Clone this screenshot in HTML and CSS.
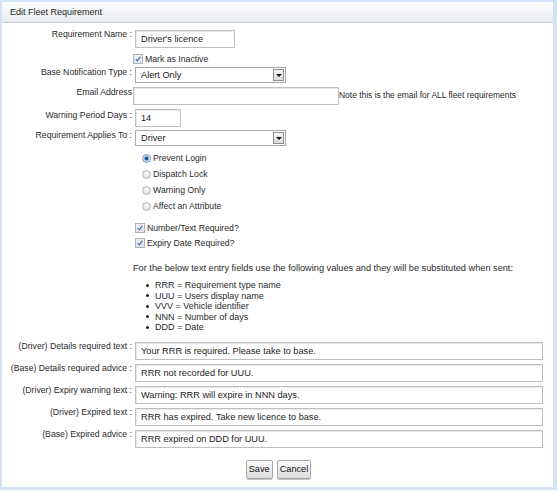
FILE: index.html
```html
<!DOCTYPE html>
<html>
<head>
<meta charset="utf-8">
<link rel="stylesheet" href="styles.css">
</head>
<body>
<div class="panel">
  <div class="header">Edit Fleet Requirement</div>
  <div class="form">
    <div class="row r-name">
      <div class="lbl">Requirement Name :</div>
      <div class="input w-name">Driver's licence</div>
    </div>
    <div class="row r-inactive">
      <div class="lbl"></div>
      <div class="opt"><span class="cb"><svg viewBox="0 0 10 10" width="10" height="10"><path d="M2.2 5.2 L4.2 7.3 L7.8 2.4" fill="none" stroke="#3a6fc0" stroke-width="1.4"/></svg></span>Mark as Inactive</div>
    </div>
    <div class="row r-notif">
      <div class="lbl">Base Notification Type :</div>
      <div class="select"><span class="sel-text">Alert Only</span><span class="sel-btn"><svg viewBox="0 0 8 4" width="6" height="3"><path d="M0 0 H8 L4 4 Z" fill="#111"/></svg></span></div>
    </div>
    <div class="row r-email">
      <div class="lbl">Email Address</div>
      <div class="input w-email"></div>
      <div class="note">Note this is the email for ALL fleet requirements</div>
    </div>
    <div class="row r-warn">
      <div class="lbl">Warning Period Days :</div>
      <div class="input w-days">14</div>
    </div>
    <div class="row r-applies">
      <div class="lbl">Requirement Applies To :</div>
      <div class="select"><span class="sel-text">Driver</span><span class="sel-btn"><svg viewBox="0 0 8 4" width="6" height="3"><path d="M0 0 H8 L4 4 Z" fill="#111"/></svg></span></div>
    </div>
    <div class="radios">
      <div class="radio-row"><span class="rb on"></span>Prevent Login</div>
      <div class="radio-row"><span class="rb"></span>Dispatch Lock</div>
      <div class="radio-row"><span class="rb"></span>Warning Only</div>
      <div class="radio-row"><span class="rb"></span>Affect an Attribute</div>
    </div>
    <div class="checks">
      <div class="check-row"><span class="cb"><svg viewBox="0 0 10 10" width="10" height="10"><path d="M2.2 5.2 L4.2 7.3 L7.8 2.4" fill="none" stroke="#3a6fc0" stroke-width="1.4"/></svg></span>Number/Text Required?</div>
      <div class="check-row"><span class="cb"><svg viewBox="0 0 10 10" width="10" height="10"><path d="M2.2 5.2 L4.2 7.3 L7.8 2.4" fill="none" stroke="#3a6fc0" stroke-width="1.4"/></svg></span>Expiry Date Required?</div>
    </div>
    <div class="para">For the below text entry fields use the following values and they will be substituted when sent:</div>
    <ul class="vals">
      <li>RRR = Requirement type name</li>
      <li>UUU = Users display name</li>
      <li>VVV = Vehicle identifier</li>
      <li>NNN = Number of days</li>
      <li>DDD = Date</li>
    </ul>
    <div class="texts">
      <div class="row trow">
        <div class="lbl">(Driver) Details required text :</div>
        <div class="input w-long">Your RRR is required. Please take to base.</div>
      </div>
      <div class="row trow">
        <div class="lbl">(Base) Details required advice :</div>
        <div class="input w-long">RRR not recorded for UUU.</div>
      </div>
      <div class="row trow">
        <div class="lbl">(Driver) Expiry warning text :</div>
        <div class="input w-long">Warning: RRR will expire in NNN days.</div>
      </div>
      <div class="row trow">
        <div class="lbl">(Driver) Expired text :</div>
        <div class="input w-long">RRR has expired. Take new licence to base.</div>
      </div>
      <div class="row trow">
        <div class="lbl">(Base) Expired advice :</div>
        <div class="input w-long">RRR expired on DDD for UUU.</div>
      </div>
    </div>
    <div class="buttons">
      <span class="btn">Save</span>
      <span class="btn">Cancel</span>
    </div>
  </div>
</div>
</body>
</html>
```

FILE: styles.css
```css
html, body {
  margin: 0;
  padding: 0;
  background: #ffffff;
}

body {
  font-family: "Liberation Sans", Arial, sans-serif;
  font-size: 8.7px;
  color: #2a2a2a;
}

.panel {
  width: 557px;
  height: 490px;
  box-sizing: border-box;
  border-style: solid;
  border-color: #d3e3f5;
  border-width: 2px 4px 3px 2px;
  background: #ffffff;
}

.header {
  height: 20px;
  line-height: 20px;
  padding-left: 8px;
  background: linear-gradient(#fefefe, #e7eaef);
  border-bottom: 1px solid #c9ccd1;
  font-size: 9px;
  color: #1e1e1e;
}

.form {
  padding-top: 7px;
  display: flex;
  flex-direction: column;
}

.row {
  display: flex;
  align-items: flex-start;
}

.lbl {
  width: 130px;
  flex: none;
  text-align: right;
  line-height: 10px;
  white-space: nowrap;
}

.input {
  box-sizing: border-box;
  height: 18px;
  margin-left: 3px;
  border: 1px solid #bfbfbf;
  box-shadow: inset 1px 1px 0 #e9e9e9;
  background: #fff;
  padding: 0 5px;
  line-height: 17px;
  font-size: 9.2px;
  color: #1c1c1c;
  white-space: nowrap;
  overflow: hidden;
}

.r-name .lbl { margin-top: -1px; }
.w-name { width: 100px; }
.w-email { width: 206px; margin-left: 1px; }
.w-days { width: 46px; }
.w-long { width: 408px; }

.note {
  line-height: 10px;
  margin-left: 0;
  margin-top: 3px;
  font-size: 8.45px;
  white-space: nowrap;
}

.r-inactive { margin-top: 4px; height: 13px; }
.r-notif { margin-top: 2px; }
.r-email { margin-top: 4px; }
.r-warn { margin-top: 4px; }
.r-warn .lbl { margin-top: 1px; }
.r-applies { margin-top: 3px; }

.opt {
  margin-left: 1px;
  display: flex;
  align-items: center;
  height: 13px;
}

.cb {
  width: 10px;
  height: 10px;
  box-sizing: border-box;
  border: 1px solid #aab3bf;
  background: linear-gradient(#eef0f3, #dfe3e8);
  display: inline-flex;
  align-items: center;
  justify-content: center;
  margin-right: 2px;
  flex: none;
}

.cb svg {
  display: block;
}

.select {
  box-sizing: border-box;
  width: 151px;
  height: 16px;
  margin-left: 3px;
  border: 1px solid #a9a9a9;
  background: #fff;
  display: flex;
  align-items: center;
  justify-content: space-between;
  padding: 0 1px 0 5px;
  font-size: 9.2px;
  color: #1c1c1c;
}

.sel-btn {
  width: 11px;
  height: 12px;
  box-sizing: border-box;
  border: 1px solid #8f8f8f;
  background: linear-gradient(#f7f7f7, #d9d9d9);
  display: flex;
  align-items: center;
  justify-content: center;
}

.sel-btn svg { display: block; }

.radios {
  margin-top: 4px;
  padding-left: 140px;
  display: flex;
  flex-direction: column;
}

.radio-row {
  height: 16px;
  display: flex;
  align-items: center;
}

.rb {
  width: 9px;
  height: 9px;
  box-sizing: border-box;
  border-radius: 50%;
  border: 1px solid #b4b8bd;
  background: radial-gradient(circle at 50% 40%, #fafafa, #d8dbdf);
  margin-right: 2px;
  display: inline-flex;
  align-items: center;
  justify-content: center;
}

.rb.on {
  border-color: #7d98bd;
  background: radial-gradient(circle at 50% 50%, #1c3e72 0, #2f5fa3 1.6px, #bcd2ee 2.4px, #e9eef5 4px);
}

.checks {
  margin-top: 6px;
  padding-left: 133px;
  display: flex;
  flex-direction: column;
}

.check-row {
  height: 15px;
  display: flex;
  align-items: center;
}

.para {
  margin-top: 12px;
  padding-left: 131px;
  line-height: 12px;
  font-size: 9.2px;
  white-space: nowrap;
}

.vals {
  list-style: none;
  margin: 6px 0 0 0;
  padding: 0 0 0 144px;
  font-size: 9px;
}

.vals li {
  height: 10.5px;
  line-height: 10.5px;
  display: flex;
  align-items: center;
}

.vals li::before {
  content: "";
  width: 3px;
  height: 3px;
  border-radius: 50%;
  background: #222;
  margin-right: 6px;
  flex: none;
}

.texts {
  margin-top: 9.5px;
  display: flex;
  flex-direction: column;
  gap: 4px;
}

.trow .lbl {
  margin-top: -1px;
}

.buttons {
  margin-top: 12px;
  display: flex;
  justify-content: center;
  gap: 4px;
  padding-left: 2px;
}

.btn {
  box-sizing: border-box;
  height: 19px;
  line-height: 17px;
  padding: 0 2px;
  border: 1px solid #a7a7a7;
  border-radius: 2px;
  background: linear-gradient(#fbfbfb, #dcdcdc);
  box-shadow: 0 1px 0 #c8c8c8;
  font-size: 9.2px;
  color: #111;
}
```
